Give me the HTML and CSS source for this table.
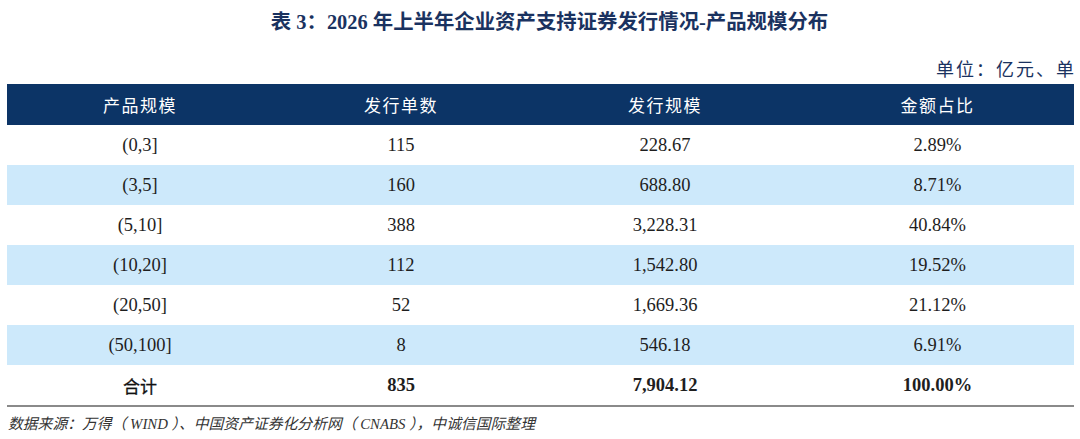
FILE: index.html
```html
<!DOCTYPE html>
<html lang="zh-CN">
<head>
<meta charset="utf-8">
<title>表 3</title>
<link rel="stylesheet" href="styles.css">
</head>
<body>
<div class="page">
  <h1 class="title">表 3：2026 年上半年企业资产支持证券发行情况-产品规模分布</h1>
  <div class="unit">单位：亿元、单</div>
  <table class="data">
    <colgroup>
      <col class="c1"><col class="c2"><col class="c3"><col class="c4">
    </colgroup>
    <thead>
      <tr><th>产品规模</th><th>发行单数</th><th>发行规模</th><th>金额占比</th></tr>
    </thead>
    <tbody>
      <tr><td>(0,3]</td><td>115</td><td>228.67</td><td>2.89%</td></tr>
      <tr class="alt"><td>(3,5]</td><td>160</td><td>688.80</td><td>8.71%</td></tr>
      <tr><td>(5,10]</td><td>388</td><td>3,228.31</td><td>40.84%</td></tr>
      <tr class="alt"><td>(10,20]</td><td>112</td><td>1,542.80</td><td>19.52%</td></tr>
      <tr><td>(20,50]</td><td>52</td><td>1,669.36</td><td>21.12%</td></tr>
      <tr class="alt"><td>(50,100]</td><td>8</td><td>546.18</td><td>6.91%</td></tr>
      <tr class="total"><td class="cjk">合计</td><td>835</td><td>7,904.12</td><td>100.00%</td></tr>
    </tbody>
  </table>
  <p class="source">数据来源：万得（ WIND ）、中国资产证券化分析网（ CNABS ），中诚信国际整理</p>
</div>
</body>
</html>
```

FILE: styles.css
```css
html, body {
  margin: 0;
  padding: 0;
  background: #ffffff;
}

.page {
  width: 1067px;
  margin-left: 7px;
  font-family: "Liberation Serif", "Noto Sans CJK SC", serif;
}

.title {
  margin: 0;
  padding-left: 18px;
  height: 45px;
  line-height: 45px;
  text-align: center;
  font-size: 20.4px;
  font-weight: bold;
  color: #1a3260;
  font-family: "Liberation Serif", "Noto Sans CJK SC", serif;
}

.unit {
  height: 39px;
  line-height: 46px;
  text-align: right;
  font-family: "Noto Sans CJK SC", sans-serif;
  font-size: 18px;
  letter-spacing: 2px;
  margin-right: -2px;
  color: #1a3260;
}

.data {
  width: 1067px;
  border-collapse: collapse;
  table-layout: fixed;
}

.c1 { width: 266px; }
.c2 { width: 256px; }
.c3 { width: 272px; }
.c4 { width: 273px; }

.data th {
  height: 41px;
  padding: 0;
  background: #0c3466;
  color: #ffffff;
  font-family: "Noto Sans CJK SC", sans-serif;
  font-weight: normal;
  font-size: 17px;
  letter-spacing: 1.5px;
  text-align: center;
}

.data td {
  height: 40px;
  padding: 0;
  text-align: center;
  font-size: 18.5px;
  color: #1e1e1e;
  font-family: "Liberation Serif", "Noto Sans CJK SC", serif;
}

.data tr.alt td {
  background: #cde9fb;
}

.data tr.total td {
  height: 40px;
  font-weight: bold;
  border-bottom: 2px solid #8a8a8a;
}

.data tr.total td.cjk {
  font-family: "Noto Sans CJK SC", sans-serif;
  font-size: 17px;
  font-weight: normal;
  color: #111;
  -webkit-text-stroke: 0.3px #111;
}

.source {
  margin: 0;
  padding-left: 1px;
  height: 31px;
  line-height: 34px;
  font-size: 14.8px;
  font-style: italic;
  color: #333333;
  font-family: "Liberation Serif", "Noto Sans CJK SC", serif;
}
```
